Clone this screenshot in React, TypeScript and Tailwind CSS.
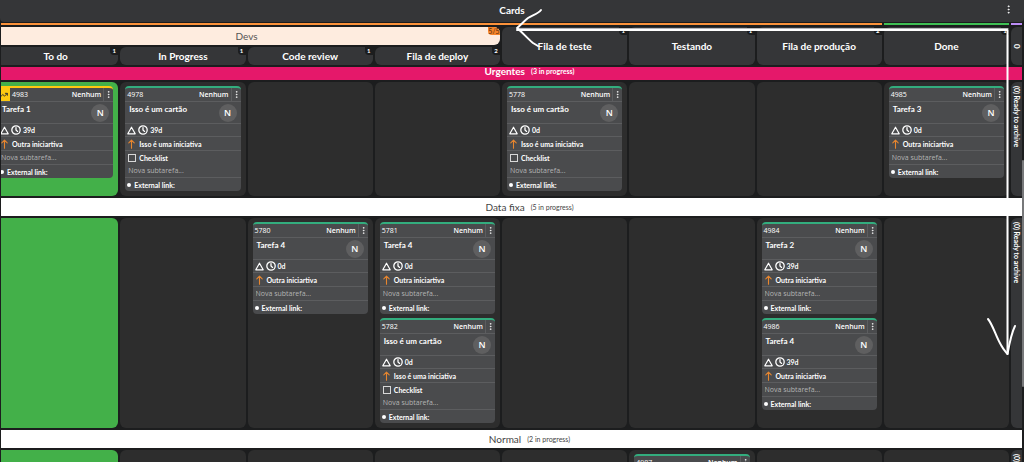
import { EllipsisVertical, TrendingUp } from 'lucide-react'
import clsx from 'clsx'

type Task = {
  id: string
  title: string
  age: string
  initiative: string
  checklist?: boolean
  flagged?: boolean
}

type Lane = {
  name: string
  count: string
  urgent?: boolean
  columns: Task[][]
}

const OTHER = 'Outra iniciartiva'
const INITIATIVE = 'Isso é uma iniciativa'

const DEV_COLUMNS = [
  { label: 'To do', count: 1 },
  { label: 'In Progress', count: 1 },
  { label: 'Code review', count: 1 },
  { label: 'Fila de deploy', count: 2 },
]

const COLUMNS = [
  { label: 'Fila de teste', count: 1 },
  { label: 'Testando', count: 1 },
  { label: 'Fila de produção', count: 2 },
  { label: 'Done', count: 1 },
]

const LANES: Lane[] = [
  {
    name: 'Urgentes',
    count: '(3 in progress)',
    urgent: true,
    columns: [
      [{ id: '4983', title: 'Tarefa 1', age: '39d', initiative: OTHER, flagged: true }],
      [{ id: '4978', title: 'Isso é um cartão', age: '39d', initiative: INITIATIVE, checklist: true }],
      [],
      [],
      [{ id: '5778', title: 'Isso é um cartão', age: '0d', initiative: INITIATIVE, checklist: true }],
      [],
      [],
      [{ id: '4985', title: 'Tarefa 3', age: '0d', initiative: OTHER }],
    ],
  },
  {
    name: 'Data fixa',
    count: '(5 in progress)',
    columns: [
      [],
      [],
      [{ id: '5780', title: 'Tarefa 4', age: '0d', initiative: OTHER }],
      [
        { id: '5781', title: 'Tarefa 4', age: '0d', initiative: OTHER },
        { id: '5782', title: 'Isso é um cartão', age: '0d', initiative: INITIATIVE, checklist: true },
      ],
      [],
      [],
      [
        { id: '4984', title: 'Tarefa 2', age: '39d', initiative: OTHER },
        { id: '4986', title: 'Tarefa 4', age: '39d', initiative: OTHER },
      ],
      [],
    ],
  },
  {
    name: 'Normal',
    count: '(2 in progress)',
    columns: [
      [],
      [],
      [],
      [],
      [],
      [{ id: '4987', title: 'Tarefa 5', age: '39d', initiative: OTHER }],
      [],
      [],
    ],
  },
]

const GRID = 'grid grid-cols-[repeat(8,minmax(0,1fr))_11px] gap-x-0.5 -ml-2'

function TriangleIcon() {
  return (
    <svg width="9" height="9" viewBox="0 0 9 9" fill="none" stroke="currentColor" strokeWidth="1.2" strokeLinejoin="round">
      <path d="M4.500 1.200L8.200 7.800H0.800Z" />
    </svg>
  )
}

function ClockIcon() {
  return (
    <svg width="10" height="10" viewBox="0 0 10 10" fill="none" stroke="currentColor" strokeWidth="1.300" strokeLinecap="round">
      <circle cx="5" cy="5" r="4.200" />
      <path d="M5 2.600V5L6.600 6.400" />
    </svg>
  )
}

function ArrowUpIcon() {
  return (
    <svg width="9" height="10" viewBox="0 0 9 10" fill="none" stroke="#e8862e" strokeWidth="1.100" strokeLinecap="round" strokeLinejoin="round">
      <path d="M4.500 9.200V1.200M1.800 3.800L4.500 1.200L7.200 3.800" />
    </svg>
  )
}

function CountBadge({ count }: { count: number }) {
  return (
    <span className="absolute top-0 right-0 w-2 h-2 rounded-bl bg-[#1c1d1e] text-[6px] leading-[8px] font-bold text-center">
      {count}
    </span>
  )
}

function ColumnHeader({ label, count }: { label: string; count: number }) {
  return (
    <div className="relative flex items-center justify-center h-full rounded-md bg-[#353638] text-[10px] leading-[12px] font-bold">
      {label}
      <CountBadge count={count} />
    </div>
  )
}

function TaskCard({ task }: { task: Task }) {
  return (
    <article
      className={clsx(
        'rounded-sm border-t-2 bg-[#4a4b4d] overflow-hidden text-[7px] leading-[12px] font-bold',
        task.flagged ? 'border-[#fdc811]' : 'border-[#33ad7e]'
      )}
    >
      <header className="flex items-center h-3.5 border-b border-[#5c5d5f] font-medium font-[family-name:'Open_Sans',sans-serif]">
        {task.flagged && (
          <span className="flex items-center justify-center w-3 h-full bg-[#fdc811] text-[#333]">
            <TrendingUp size={8} strokeWidth={3} />
          </span>
        )}
        <span className="pl-0.5">{task.id}</span>
        <span className="ml-auto pr-0.5 font-semibold">Nenhum</span>
        <button aria-label={`Options for ${task.id}`} className="flex items-center justify-center w-2.5 h-full border-l border-[#5c5d5f]">
          <EllipsisVertical size={9} strokeWidth={2} className="shrink-0" />
        </button>
      </header>
      <div className="flex items-start justify-between h-[22px] px-1 border-b border-[#5c5d5f]">
        <h3 className="pt-px text-[8px] leading-[12px]">{task.title}</h3>
        <span className="mt-0.5 flex items-center justify-center size-[18px] rounded-full bg-[#5f5f60] text-[9px] font-semibold font-[family-name:'Open_Sans',sans-serif]">
          N
        </span>
      </div>
      <div className="flex items-center h-[13px] pl-0.5 gap-0.5 border-b border-[#5c5d5f]">
        <TriangleIcon />
        <ClockIcon />
        <span>{task.age}</span>
      </div>
      <div className="flex items-center h-3.5 pl-0.5 gap-[3px] border-b border-[#5c5d5f]">
        <ArrowUpIcon />
        <span>{task.initiative}</span>
      </div>
      {task.checklist && (
        <label className="flex items-center h-[13px] pl-[3px] gap-[3px]">
          <input type="checkbox" className="appearance-none size-2 border border-[#d8d8d8]" />
          Checklist
        </label>
      )}
      <div className="flex items-end h-3.5 pl-[3px] border-b border-[#5c5d5f]">
        <input
          aria-label={`Nova subtarefa ${task.id}`}
          placeholder="Nova subtarefa..."
          className="w-full h-3 font-normal font-[family-name:'Open_Sans',sans-serif] placeholder:text-[#b4b4b4] outline-none"
        />
      </div>
      <div className="flex items-center h-[13px] pl-0.5 gap-[3px]">
        <span className="size-1 rounded-full bg-white" />
        External link:
      </div>
    </article>
  )
}

function LaneTitle({ lane }: { lane: Lane }) {
  return (
    <div
      className={clsx(
        'flex justify-center gap-1.5 pl-9',
        lane.urgent ? 'items-start h-[13px] bg-[#e5186a] font-bold' : 'items-center h-[18px] bg-white text-[#444]'
      )}
    >
      <h2 className={clsx('text-[10px]', lane.urgent ? 'leading-[8px]' : 'leading-[12px]')}>{lane.name}</h2>
      <span className={clsx('text-[7px]', lane.urgent ? 'leading-[8px]' : 'leading-[12px]')}>{lane.count}</span>
    </div>
  )
}

function LaneRow({ lane }: { lane: Lane }) {
  return (
    <div className={GRID}>
      {lane.columns.map((tasks, i) => (
        <div
          key={i}
          className={clsx(
            'flex flex-col gap-1 pt-1 pb-[5px] px-[5px] rounded-md',
            i === 0 ? 'bg-[#43b049]' : 'bg-[#2d2d2d]'
          )}
        >
          {tasks.map(task => (
            <TaskCard key={task.id} task={task} />
          ))}
        </div>
      ))}
      <div className="flex items-center pt-1 rounded-l-md bg-[#353638] [writing-mode:vertical-rl] text-[7px] leading-[11px] font-bold whitespace-nowrap">
        (0) Ready to archive
      </div>
    </div>
  )
}

// hand-drawn arrows pointing back over the board
function Arrows() {
  return (
    <svg
      className="absolute top-0 left-0 pointer-events-none"
      width="1024"
      height="462"
      viewBox="0 0 1024 462"
      fill="none"
      stroke="#fff"
      strokeWidth="2"
      strokeLinecap="round"
      strokeLinejoin="round"
      aria-hidden="true"
    >
      <path d="M518 28.5H1008" stroke="#b9b9bb" strokeWidth="1" />
      <path d="M517 30H1007.500V354" />
      <path d="M541 10C538 14 533 15 528 18C524 21 521 25 517 28C522 32 527 38 533 43L538 46" />
      <path d="M988 319C993 325 996 337 1001 345C1003 349 1005 351 1007.500 354C1009 346 1011 334 1015 326" />
    </svg>
  )
}

export default function App() {
  return (
    <main className="relative h-screen overflow-hidden bg-[#1c1d1e] pl-px pr-0.5 text-white font-[family-name:Lato,sans-serif]">
      <header className="relative flex items-center justify-center h-[22px] pb-[3px] -ml-px -mr-0.5 rounded-b-sm bg-[#353638]">
        <h1 className="text-[10px] leading-[12px] font-bold">Cards</h1>
        <button aria-label="Board options" className="absolute right-2.5 top-1">
          <EllipsisVertical size={11} strokeWidth={2} />
        </button>
      </header>

      <div className="overflow-hidden">
        <div className={clsx(GRID, 'h-0.5 mt-px')}>
          <div className="col-span-7 bg-[#fb923a]" />
          <div className="bg-[#3fbf54]" />
          <div className="bg-[#bb8cf5]" />
        </div>

        <div className={clsx(GRID, 'grid-rows-[18px_18px] gap-y-0.5 mt-0.5')}>
          <div className="relative col-span-4 flex items-center justify-center rounded-md bg-[#feecdf] text-[#555] text-[10px] leading-[12px]">
            Devs
            <span className="absolute top-0 right-0 w-3 h-2 rounded-bl rounded-tr-md bg-[#f5842a] text-[#5a3010] text-[7px] leading-[8px] text-center">
              5/5
            </span>
          </div>
          {COLUMNS.map(col => (
            <div key={col.label} className="row-span-2">
              <ColumnHeader {...col} />
            </div>
          ))}
          <div className="row-span-2 flex items-center justify-center rounded-l-md bg-[#353638] text-[8px] leading-[11px] font-bold [writing-mode:vertical-rl]">
            0
          </div>
          {DEV_COLUMNS.map(col => (
            <ColumnHeader key={col.label} {...col} />
          ))}
        </div>

        <div className="flex flex-col gap-0.5 mt-0.5">
          {LANES.map(lane => (
            <section key={lane.name} className="flex flex-col gap-0.5">
              <LaneTitle lane={lane} />
              <LaneRow lane={lane} />
            </section>
          ))}
        </div>
      </div>

      <div className="absolute right-0 top-40 w-0.5 h-[227px] rounded-full bg-[#77787a]" />
      <Arrows />
    </main>
  )
}
